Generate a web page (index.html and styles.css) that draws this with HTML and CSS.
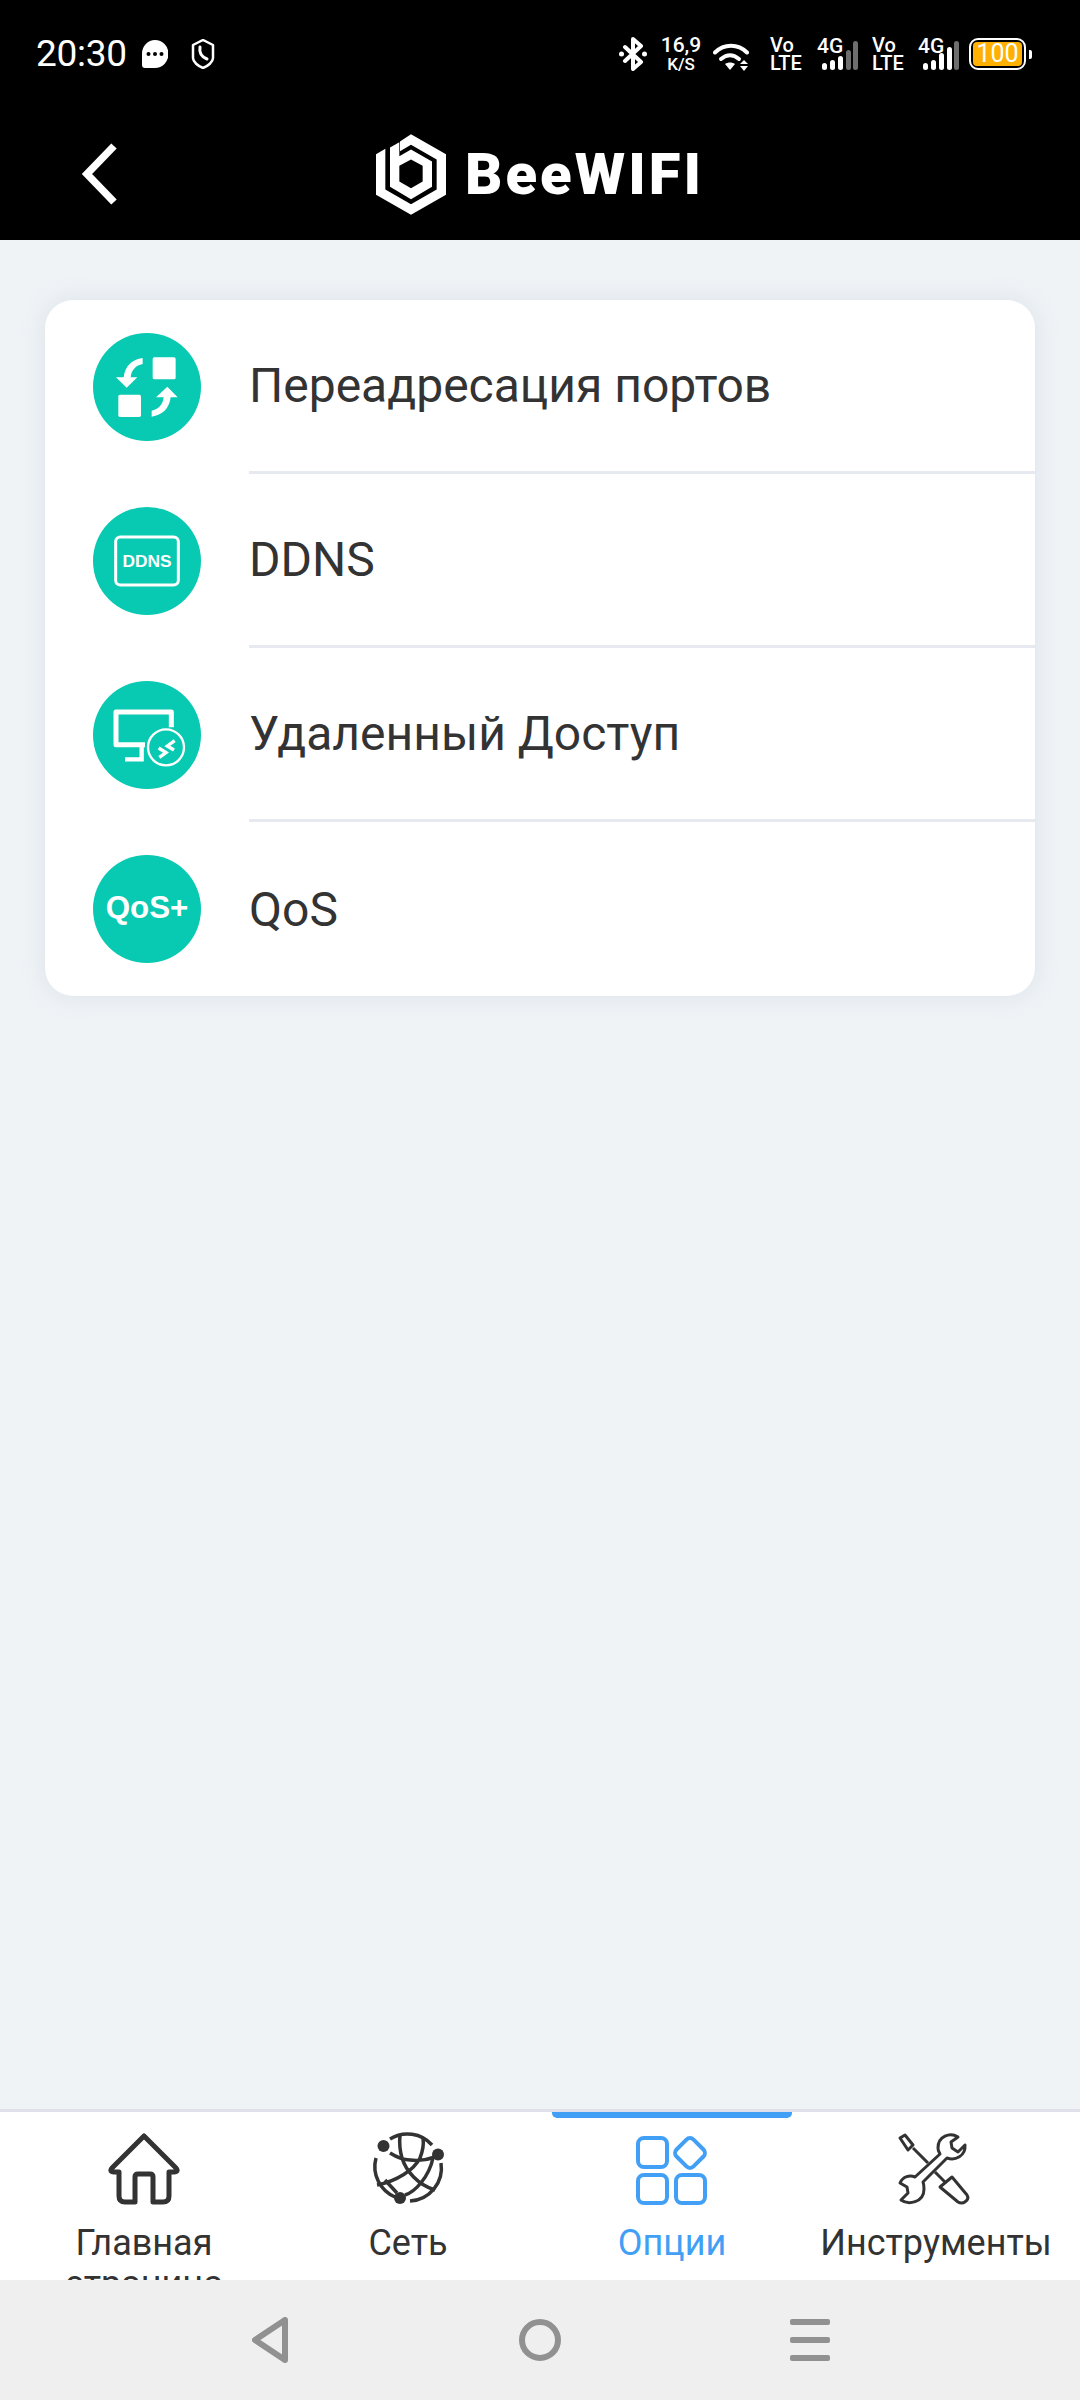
FILE: index.html
```html
<!DOCTYPE html>
<html lang="ru">
<head>
<meta charset="utf-8">
<title>BeeWiFi</title>
<link rel="stylesheet" href="styles.css">
</head>
<body>
<div class="app">
  <header class="header">
    <div class="status">
      <span class="time">20:30</span>
      <svg class="ic-msg" viewBox="0 0 26 28"><path class="w" d="M13 0a13 13.500 0 0 1 0 28H3a3 3 0 0 1-3-3V13.500A13 13.500 0 0 1 13 0z"/><circle class="k" cx="6.500" cy="14" r="2"/><circle class="k" cx="13" cy="14" r="2"/><circle class="k" cx="19.500" cy="14" r="2"/></svg>
      <svg class="ic-shield" viewBox="0 0 24 30"><path class="ws" d="M12 1l10 5v13c0 4-5 8-10 10C7 27 2 23 2 19V6z"/><path class="ws2" d="M9 8c-1 6 2 10 7 12"/></svg>
      <div class="status-right">
        <svg class="ic-bt" viewBox="0 0 28 34"><path class="ws3" d="M6 10l16 15-8 7V2l8 7L6 24"/><circle class="w" cx="2.500" cy="17" r="2.500"/><circle class="w" cx="25.500" cy="17" r="2.500"/></svg>
        <div class="speed"><span class="speed-n">16,9</span><span class="speed-u">K/S</span></div>
        <svg class="ic-wifi" viewBox="0 0 36 28"><path class="ws3" d="M2 9.500c9-9 23-9 32 0"/><path class="ws3" d="M8 16c6-5 12-5 18 0"/><path class="w" d="M12 21c3-2 7-2 10 0l-5 6z"/><path class="w" d="M27 21l4-4 4 4zM27 23h8l-4 5z"/></svg>
        <div class="volte"><span>Vo</span><span>LTE</span></div>
        <div class="net">
          <span class="net-t">4G</span>
          <svg class="ic-bars" viewBox="0 0 36 29"><rect class="w" x="0" y="22" width="5" height="7" rx="2.500"/><rect class="w" x="8" y="19" width="5" height="10" rx="2.500"/><rect class="w" x="16" y="15" width="5" height="14" rx="2.500"/><rect class="g" x="24" y="9" width="5" height="20" rx="2.500"/><rect class="g" x="31" y="0" width="5" height="29" rx="2.500"/></svg>
        </div>
        <div class="volte v2"><span>Vo</span><span>LTE</span></div>
        <div class="net">
          <span class="net-t">4G</span>
          <svg class="ic-bars" viewBox="0 0 36 29"><rect class="w" x="0" y="22" width="5" height="7" rx="2.500"/><rect class="w" x="8" y="19" width="5" height="10" rx="2.500"/><rect class="w" x="16" y="12" width="5" height="17" rx="2.500"/><rect class="w" x="24" y="6" width="5" height="23" rx="2.500"/><rect class="g" x="31" y="0" width="5" height="29" rx="2.500"/></svg>
        </div>
        <div class="battery"><div class="battery-body"><span class="battery-fill">100</span></div><span class="battery-nub"></span></div>
      </div>
    </div>
    <div class="toolbar">
      <div class="back"><svg class="ic-back" viewBox="0 0 38 62"><path d="M33 3L6 31l27 28"/></svg></div>
      <div class="logo">
        <svg class="logo-mark" viewBox="40 40 210 242">
          <path class="w" fill-rule="evenodd" d="M145 40L250 100V222L145 282L40 222V100L68 84V206L145 250L222 206V116L145 72L112 91V62z"/>
          <path class="w" fill-rule="evenodd" d="M82 80L110 64V106L145 86L208 122V198L145 235L82 198zM110 135V182L145 202L180 182V135L145 116z"/>
        </svg>
        <span class="logo-text">BeeWIFI</span>
      </div>
      <div></div>
    </div>
  </header>

  <main class="main">
    <section class="card">
      <div class="row">
        <svg class="badge" viewBox="189 129 324 324"><circle class="teal" cx="351" cy="291" r="162"/><rect class="w" x="368" y="202" width="69" height="66" rx="5"/><rect class="w" x="265" y="314" width="68" height="67" rx="5"/><path class="w" d="M338 204C306 208 285 228 281 262H258L290 293L322 262H302C304 240 318 226 338 222Z"/><path class="w" d="M365 380C397 376 418 356 422 322H443L412 290L378 322H401C399 344 385 358 365 362Z"/></svg>
        <div class="row-text">Переадресация портов</div>
      </div>
      <div class="row">
        <svg class="badge" viewBox="189 651 324 324"><circle class="teal" cx="351" cy="813" r="162"/><rect class="b-stroke" x="257" y="741" width="188" height="144" rx="14"/><text class="b-ddns" x="351" y="831">DDNS</text></svg>
        <div class="row-text">DDNS</div>
      </div>
      <div class="row">
        <svg class="badge" viewBox="189 123 324 324"><circle class="teal" cx="351" cy="285" r="162"/><path class="b-mon" d="M345 314H258V216H424V262"/><path class="b-mon2" d="M335 316V358H285"/><circle class="b-ring" cx="408" cy="322" r="54"/><path class="b-chev" d="M386 324L408 338L388 352M434 302L412 318L432 330"/></svg>
        <div class="row-text">Удаленный Доступ</div>
      </div>
      <div class="row">
        <svg class="badge" viewBox="189 645 324 324"><circle class="teal" cx="351" cy="807" r="162"/><text class="b-qos" x="351" y="835">QoS+</text></svg>
        <div class="row-text">QoS</div>
      </div>
    </section>
  </main>

  <nav class="tabs">
    <div class="tab">
      <svg class="tab-ic" viewBox="0 0 72 72"><path class="s-dark" d="M36 3L4 35Q1 39 6 39H11V63Q11 69 17 69H27V44Q27 41 30 41H42Q45 41 45 44V69H55Q61 69 61 63V39H66Q71 39 68 35Z"/></svg>
      <span class="tab-label">Главная страница</span>
    </div>
    <div class="tab">
      <svg class="tab-ic" viewBox="0 0 72 72">
        <path class="s-dark2" d="M18 6A33 33 0 0 1 60 12M69 30A33 33 0 0 1 38 68M23 64A33 33 0 0 1 4 25"/>
        <path class="s-dark2" d="M28 2C27 12 28 18 30 25C34 38 46 52 63 57M51 5C52 12 50 20 48 25C42 37 25 48 5 52M18 20C26 25 32 27 38 27C46 28 55 27 63 24M13 47L25 60M33 62C43 59 57 44 61 25"/>
        <circle class="d" cx="11.500" cy="13" r="6"/><circle class="d" cx="66" cy="21.500" r="6"/><circle class="d" cx="28" cy="65" r="6"/>
      </svg>
      <span class="tab-label">Сеть</span>
    </div>
    <div class="tab tab-active">
      <span class="tab-bar"></span>
      <svg class="tab-ic" viewBox="0 0 72 72"><rect class="s-blue" x="2" y="5" width="29" height="29" rx="6"/><rect class="s-blue" x="2" y="42" width="29" height="28" rx="6"/><rect class="s-blue" x="40" y="42" width="29" height="28" rx="6"/><rect class="s-blue" x="42" y="8" width="24" height="24" rx="5" transform="rotate(45 54 20)"/></svg>
      <span class="tab-label">Опции</span>
    </div>
    <div class="tab">
      <svg class="tab-ic" viewBox="0 0 72 72"><path class="s-tool" d="M58 4C50-1 38 3 38 15C38 18 39 19 40 21L15 44C10 42 3 43 0 50L7 54L8 60L1 67C8 72 24 70 24 56C24 53 24 51 23 49L47 25C55 28 66 23 65 12L58 19L52 15L51 9Z"/><path class="s-tool" d="M0 5L5 2L13 12L8 17ZM13 15L28 30M35 39L45 49M40 54L52 44L67 62C70 67 63 72 58 69Z"/></svg>
      <span class="tab-label">Инструменты</span>
    </div>
  </nav>

  <footer class="sysnav">
    <div class="sys-cell"><svg class="sys-back" viewBox="0 0 36 46"><path d="M33 3V43L3 23Z"/></svg></div>
    <div class="sys-cell"><span class="sys-home"></span></div>
    <div class="sys-cell"><div class="sys-menu"><span></span><span></span><span></span></div></div>
  </footer>
</div>
</body>
</html>
```
FILE: styles.css
```css
* { box-sizing: border-box; }
html, body { margin: 0; padding: 0; }
body { font-family: Roboto, "Liberation Sans", sans-serif; color: #333; background: #eff3f6; }
.app { width: 1080px; height: 2400px; display: flex; flex-direction: column; overflow: hidden; }

.w { fill: #fff; }
.k { fill: #000; }
.g { fill: #6e6e6e; }
.d { fill: #333; }
.ws { fill: none; stroke: #fff; stroke-width: 2.500; stroke-linejoin: round; }
.ws2 { fill: none; stroke: #fff; stroke-width: 3; stroke-linecap: round; }
.ws3 { fill: none; stroke: #fff; stroke-width: 4; stroke-linecap: round; stroke-linejoin: round; }

.header { background: #000; height: 240px; flex: none; color: #fff; }
.status { height: 108px; display: flex; align-items: center; padding: 0 48px 0 36px; }
.time { width: 88px; font-size: 37px; line-height: 44px; font-weight: 400; letter-spacing: -0.3px; }
.ic-msg { width: 26px; height: 28px; margin-left: 18px; }
.ic-shield { width: 24px; height: 30px; margin-left: 23px; }
.status-right { margin-left: auto; display: flex; align-items: center; }
.ic-bt { width: 28px; height: 34px; }
.speed { width: 36px; margin-left: 16px; display: flex; flex-direction: column; align-items: center; font-weight: 500; }
.speed-n { font-size: 21px; line-height: 21px; }
.speed-u { font-size: 17px; line-height: 17px; }
.ic-wifi { width: 36px; height: 28px; margin-left: 14px; margin-top: 6px; }
.volte { width: 29px; margin-left: 21px; display: flex; flex-direction: column; font-size: 20px; line-height: 18px; font-weight: 500; }
.v2 { margin-left: 14px; width: 28px; }
.net { width: 41px; height: 34px; margin-left: 18px; position: relative; }
.net-t { position: absolute; left: 0; top: -1px; font-size: 21px; line-height: 20px; font-weight: 500; }
.ic-bars { position: absolute; right: 0; bottom: 1px; width: 36px; height: 29px; }
.battery { display: flex; align-items: center; margin-left: 10px; }
.battery-body { width: 57px; height: 32px; border: 2px solid #fff; border-radius: 9px; padding: 2px; display: flex; }
.battery-fill { flex: 1; background: #ffb000; border-radius: 4px; text-align: center; font-size: 25px; line-height: 24px; color: #fff; }
.battery-nub { width: 3px; height: 9px; background: #fff; margin-left: 3px; border-radius: 0 2px 2px 0; }

.toolbar { height: 132px; display: grid; grid-template-columns: 1fr auto 1fr; align-items: center; }
.back { padding-left: 81px; display: flex; }
.ic-back { width: 38px; height: 62px; fill: none; stroke: #fff; stroke-width: 7.500; }
.logo { display: flex; align-items: center; gap: 19px; }
.logo-mark { width: 70px; height: 81px; }
.logo-text { font-family: Roboto, "Liberation Sans", sans-serif; font-weight: 900; font-size: 58px; line-height: 60px; letter-spacing: 3px; color: #fff; }

.main { flex: 1; padding: 60px 45px 0; background: #eff3f6; }
.card { background: #fff; border-radius: 28px; box-shadow: 0 0 22px rgba(170, 182, 200, .28); }
.row { height: 174px; display: flex; align-items: center; padding-left: 48px; }
.badge { width: 108px; height: 108px; flex: none; }
.row-text { flex: 1; align-self: stretch; margin-left: 48px; display: flex; align-items: center; font-size: 48px; color: #333; border-bottom: 3px solid #e6e9ef; }
.row:last-child .row-text { border-bottom: 0; }
.teal { fill: #08c9b1; }
.b-stroke { fill: none; stroke: #fff; stroke-width: 9; }
.b-ddns { fill: #fff; font-family: "Liberation Sans", sans-serif; font-weight: 700; font-size: 52px; text-anchor: middle; }
.b-qos { fill: #fff; font-family: "Liberation Sans", sans-serif; font-weight: 700; font-size: 94px; text-anchor: middle; }
.b-mon { fill: none; stroke: #fff; stroke-width: 15; stroke-linejoin: round; }
.b-mon2 { fill: none; stroke: #fff; stroke-width: 13; }
.b-ring { fill: none; stroke: #fff; stroke-width: 7; }
.b-chev { fill: none; stroke: #fff; stroke-width: 10; }

.tabs { height: 171px; flex: none; background: #fff; border-top: 3px solid #dfe0ea; padding: 0 12px; display: grid; grid-template-columns: repeat(4, 264px); overflow: hidden; }
.tab { position: relative; display: flex; flex-direction: column; align-items: center; padding: 21px 12px 0; text-align: center; }
.tab-ic { width: 72px; height: 72px; flex: none; overflow: visible; }
.tab-label { margin-top: 18px; font-size: 36px; line-height: 41px; color: #333; }
.tab-active .tab-label { color: #429ff6; }
.tab-bar { position: absolute; left: 12px; right: 12px; top: 0; height: 6px; background: #429ff6; border-radius: 0 0 5px 5px; }
.s-dark { fill: none; stroke: #333; stroke-width: 5; stroke-linejoin: round; }
.s-dark2 { fill: none; stroke: #333; stroke-width: 3.500; }
.s-blue { fill: none; stroke: #429ff6; stroke-width: 4; }
.s-tool { fill: none; stroke: #333; stroke-width: 3; stroke-linejoin: round; }

.sysnav { height: 120px; flex: none; background: #efefef; display: flex; justify-content: center; align-items: center; }
.sys-cell { width: 270px; display: flex; justify-content: center; align-items: center; }
.sys-back { width: 36px; height: 46px; fill: none; stroke: #919191; stroke-width: 6; stroke-linejoin: round; }
.sys-home { width: 42px; height: 42px; border: 6px solid #919191; border-radius: 50%; }
.sys-menu { width: 40px; display: flex; flex-direction: column; gap: 12px; }
.sys-menu span { height: 6px; background: #919191; border-radius: 2px; }
```
